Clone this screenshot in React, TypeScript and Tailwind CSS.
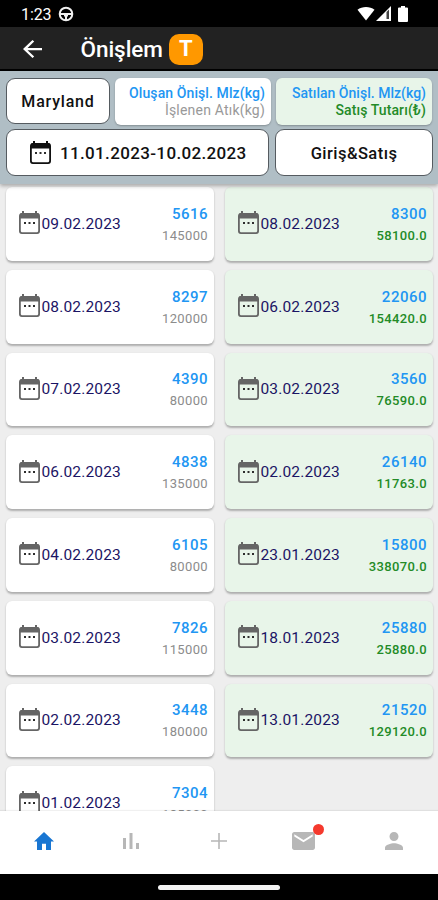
import React from 'react';

type Entry = { date: string; top: string; bottom: string };

const produced: Entry[] = [
  { date: '09.02.2023', top: '5616', bottom: '145000' },
  { date: '08.02.2023', top: '8297', bottom: '120000' },
  { date: '07.02.2023', top: '4390', bottom: '80000' },
  { date: '06.02.2023', top: '4838', bottom: '135000' },
  { date: '04.02.2023', top: '6105', bottom: '80000' },
  { date: '03.02.2023', top: '7826', bottom: '115000' },
  { date: '02.02.2023', top: '3448', bottom: '180000' },
  { date: '01.02.2023', top: '7304', bottom: '185000' },
];

const sold: Entry[] = [
  { date: '08.02.2023', top: '8300', bottom: '58100.0' },
  { date: '06.02.2023', top: '22060', bottom: '154420.0' },
  { date: '03.02.2023', top: '3560', bottom: '76590.0' },
  { date: '02.02.2023', top: '26140', bottom: '11763.0' },
  { date: '23.01.2023', top: '15800', bottom: '338070.0' },
  { date: '18.01.2023', top: '25880', bottom: '25880.0' },
  { date: '13.01.2023', top: '21520', bottom: '129120.0' },
];

function Calendar({ className }: { className: string }) {
  return (
    <svg viewBox="0 0 21 23" className={className}>
      <rect x="0.9" y="2.9" width="19.200" height="19.200" rx="2" fill="none" stroke="currentColor" strokeWidth="1.800" />
      <path d="M1 3.500a1.500 1.500 0 011.500-1.500h16A1.500 1.500 0 0120 3.500V7.500H1z" fill="currentColor" />
      <path d="M3 0h2v3H3zM16 0h2v3h-2z" fill="currentColor" />
      <path d="M5 11h2v2H5zM9.500 11h2v2h-2zM14 11h2v2h-2z" fill="#2d2d2d" />
    </svg>
  );
}

function Card({ entry, green }: { entry: Entry; green?: boolean }) {
  return (
    <div
      className={`flex h-[73.75px] shrink-0 items-center rounded-[6px] pl-[12.5px] pr-[6px] shadow-[0_1.5px_2px_rgba(0,0,0,0.27)] ${green ? 'bg-[#e8f5e9]' : 'bg-white'}`}
    >
      <Calendar className="h-[23px] w-[21px] -translate-y-px text-[#656565]" />
      <span className="ml-[2px] text-[15.5px] leading-5 tracking-[0.15px] text-[#1b1464]">{entry.date}</span>
      <div className="ml-auto flex flex-col items-end pt-[2px]">
        <span className="text-[15px] font-medium leading-[22px] tracking-[0.5px] text-[#2196f3]">{entry.top}</span>
        <span
          className={`text-[13px] leading-[22px] tracking-[0.35px] ${green ? 'font-medium text-[#238b27]' : 'text-[#8c8c8c]'}`}
        >
          {entry.bottom}
        </span>
      </div>
    </div>
  );
}

export default function App() {
  return (
    <div className="flex h-[900px] w-[438px] flex-col overflow-hidden bg-[#eeeeee] font-['Roboto','Noto_Sans',sans-serif]">
      <div className="flex h-[27px] shrink-0 items-center bg-black pl-[21px] pr-[30px] text-white">
        <span className="pt-[2px] text-[16px] leading-5 tracking-[-0.1px]">1:23</span>
        <svg viewBox="0 0 16 16" className="ml-[6.500px] size-[16px]" fill="none" stroke="#f0f0f0" strokeWidth="2">
          <circle cx="8" cy="8" r="6.3" />
          <path d="M2 8h12M8 8v6" />
          <path d="M6 9.500h4" />
        </svg>
        <div className="ml-auto flex items-center">
          <svg viewBox="0 0 18 15" className="h-[15px] w-[18px]" fill="white">
            <path d="M.5 3.7C5 .1 13 .1 17.5 3.7L9 14.5z" />
          </svg>
          <svg viewBox="0 0 15 15" className="ml-px h-[15px] w-[15px]">
            <path d="M0 15L15 0v15z" fill="white" />
            <path d="M10.5 6L13 3.5V13h-2.5z" fill="#444" />
          </svg>
          <svg viewBox="0 0 10 16" className="ml-[7px] h-[16px] w-[10px]" fill="white">
            <path d="M3 0h4v1.5h2a1 1 0 011 1V15a1 1 0 01-1 1H1a1 1 0 01-1-1V2.500a1 1 0 011-1h2z" />
          </svg>
        </div>
      </div>

      <header className="flex h-[44px] shrink-0 items-center border-b-2 border-black bg-[#222222] pl-[22.500px] text-white">
        <svg viewBox="4 4 16 16" preserveAspectRatio="none" className="mt-[2px] h-[18px] w-[19px]" fill="white">
          <path d="M20 11H7.830l5.590-5.590L12 4l-8 8 8 8 1.410-1.410L7.830 13H20v-2z" />
        </svg>
        <h1 className="ml-[39px] pt-[2px] text-[22.500px] font-medium leading-7 tracking-[-0.05px]">Önişlem</h1>
        <span className="ml-[6px] mt-[2px] flex h-[31px] w-[34px] items-center justify-center rounded-[10px] bg-[#ff9800] text-[22px] font-bold leading-none">
          T
        </span>
      </header>

      <section className="z-10 flex h-[113px] shrink-0 flex-col gap-[4px] bg-[#b0bec5] pl-[6px] pr-[5px] pt-[6px] shadow-[0_2px_4px_rgba(0,0,0,0.3)]">
        <div className="flex h-[48px] items-center">
          <button className="h-[46px] w-[104px] rounded-[9px] border border-[#555b60] bg-white pt-px text-[16px] font-medium leading-5 tracking-[0.8px] text-[#111]">
            Maryland
          </button>
          <div className="ml-[5px] flex h-[47px] w-[156px] flex-col items-end justify-center rounded-[6px] bg-white pr-[6px] shadow-[0_1px_2px_rgba(0,0,0,0.25)]">
            <span className="whitespace-nowrap text-[14px] font-medium leading-[18px] tracking-[0.1px] text-[#2196f3]">Oluşan Önişl. Mlz(kg)</span>
            <span className="whitespace-nowrap text-[14px] leading-[17px] tracking-[0.2px] text-[#999]">İşlenen Atık(kg)</span>
          </div>
          <div className="ml-[5px] flex h-[47px] w-[156px] flex-col items-end justify-center rounded-[6px] bg-[#e8f5e9] pr-[6px] shadow-[0_1px_2px_rgba(0,0,0,0.25)]">
            <span className="whitespace-nowrap text-[14px] font-medium leading-[18px] tracking-[0.02px] text-[#2196f3]">Satılan Önişl. Mlz(kg)</span>
            <span className="whitespace-nowrap text-[14px] font-medium leading-[17px] tracking-[0.1px] text-[#238b27]">Satış Tutarı(₺)</span>
          </div>
        </div>
        <div className="flex h-[47px] gap-[6px]">
          <button className="flex w-[263px] items-center rounded-[9px] border border-[#555b60] bg-white pl-[23px] text-[#111]">
            <Calendar className="h-[23px] w-[21px]" />
            <span className="ml-[9px] whitespace-nowrap pt-px text-[17px] font-medium leading-5 tracking-[0.35px]">11.01.2023-10.02.2023</span>
          </button>
          <button className="w-[158px] rounded-[9px] border border-[#555b60] bg-white pt-[3px] text-[16.500px] font-medium tracking-[0.45px] text-[#111]">
            Giriş&amp;Satış
          </button>
        </div>
      </section>

      <main className="grid min-h-0 flex-1 grid-cols-[208px_208px] justify-between overflow-hidden pl-[6px] pr-[5px] pt-[3px]">
        <div className="flex flex-col gap-[9px]">
          {produced.map((e) => <Card key={e.date} entry={e} />)}
        </div>
        <div className="flex flex-col gap-[9px]">
          {sold.map((e) => <Card key={e.date} entry={e} green />)}
        </div>
      </main>

      <nav className="z-10 grid h-[63px] shrink-0 grid-cols-5 items-center justify-items-center bg-white pb-[3px] text-[#b7b7b7] shadow-[0_-1px_1px_rgba(0,0,0,0.06)]">
        <svg viewBox="2 3 20 17" className="h-[18px] w-[20px] text-[#1976d2]" preserveAspectRatio="none" fill="currentColor">
          <path d="M10 20v-6h4v6h5v-8h3L12 3 2 12h3v8z" />
        </svg>
        <svg viewBox="0 0 16 16" className="size-[16px]" fill="currentColor">
          <path d="M0 5h3v11H0zM6.500 0h3v16h-3zM13 10h3v6h-3z" />
        </svg>
        <svg viewBox="0 0 16 16" className="size-[16px]" fill="currentColor">
          <path d="M7.200 0h1.600v7.200H16v1.600H8.800V16H7.200V8.800H0V7.200h7.200z" />
        </svg>
        <div className="relative -left-[3px] h-[18px] w-[23px]">
          <svg viewBox="2 4 20 16" preserveAspectRatio="none" className="h-[18px] w-[23px]" fill="currentColor">
            <path d="M20 4H4c-1.100 0-1.990.9-1.990 2L2 18c0 1.100.9 2 2 2h16c1.100 0 2-.9 2-2V6c0-1.100-.9-2-2-2zm0 4l-8 5-8-5V6l8 5 8-5v2z" />
          </svg>
          <span className="absolute -right-[9px] -top-[8px] size-[11px] rounded-full bg-[#f5392d]" />
        </div>
        <svg viewBox="4 4 16 16" className="h-[18px] w-[18px]" fill="currentColor">
          <path d="M12 12c2.210 0 4-1.790 4-4s-1.790-4-4-4-4 1.790-4 4 1.790 4 4 4zm0 2c-2.670 0-8 1.340-8 4v2h16v-2c0-2.660-5.330-4-8-4z" />
        </svg>
      </nav>
      <div className="flex h-[26px] shrink-0 items-center justify-center bg-black">
        <div className="h-[5px] w-[122px] rounded-full bg-[#f3f3f3]" />
      </div>
    </div>
  );
}
